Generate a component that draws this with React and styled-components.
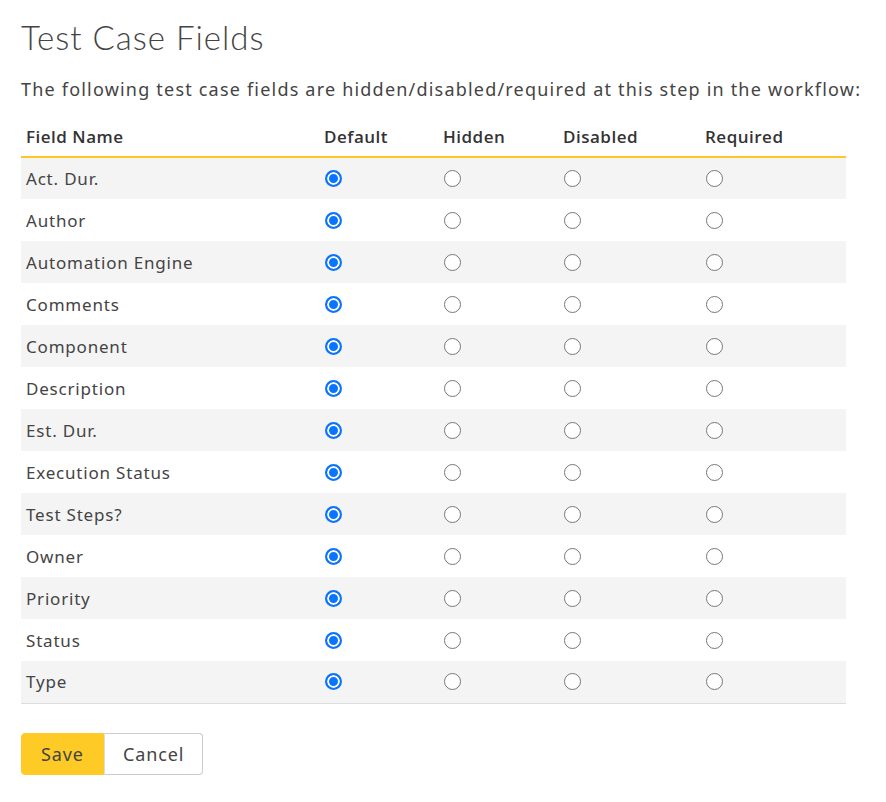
import React, { useState } from "react";
import styled, { createGlobalStyle } from "styled-components";

const FIELDS = [
  "Act. Dur.",
  "Author",
  "Automation Engine",
  "Comments",
  "Component",
  "Description",
  "Est. Dur.",
  "Execution Status",
  "Test Steps?",
  "Owner",
  "Priority",
  "Status",
  "Type",
];

const STATES = ["Default", "Hidden", "Disabled", "Required"];

export default function App() {
  const [values, setValues] = useState(
    Object.fromEntries(FIELDS.map((f) => [f, "Default"]))
  );

  return (
    <Page>
      <GlobalStyle />
      <Title>Test Case Fields</Title>
      <Intro>
        The following test case fields are hidden/disabled/required at this
        step in the workflow:
      </Intro>

      <Table>
        <colgroup>
          <col width={299} />
          <col width={119} />
          <col width={120} />
          <col width={142} />
          <col />
        </colgroup>
        <thead>
          <tr>
            <HeadCell first>Field Name</HeadCell>
            {STATES.map((state) => (
              <HeadCell key={state}>{state}</HeadCell>
            ))}
          </tr>
        </thead>
        <tbody>
          {FIELDS.map((field) => (
            <Row key={field}>
              <NameCell>{field}</NameCell>
              {STATES.map((state) => (
                <RadioCell key={state}>
                  <Radio
                    type="radio"
                    name={field}
                    checked={values[field] === state}
                    onChange={() => setValues({ ...values, [field]: state })}
                  />
                </RadioCell>
              ))}
            </Row>
          ))}
        </tbody>
      </Table>

      <ButtonGroup>
        <Button primary>Save</Button>
        <Button>Cancel</Button>
      </ButtonGroup>
    </Page>
  );
}

const GlobalStyle = createGlobalStyle`
  body {
    margin: 0;
    background: #fff;
    font-family: "Noto Sans", "Open Sans", sans-serif;
    color: #444;
  }
`;

const Page = styled.div`
  padding: 16px 0 20px 21px;
  width: 825px;
`;

const Title = styled.h1`
  margin: 0;
  font-family: Lato, "Open Sans", sans-serif;
  font-weight: 300;
  font-size: 33px;
  line-height: 42px;
  color: #444;
  letter-spacing: 1px;
`;

const Intro = styled.p`
  margin: 19px 0 23px;
  font-size: 18px;
  line-height: 24px;
  white-space: nowrap;
  letter-spacing: 1.2px;
  color: #444;
`;

const Table = styled.table`
  width: 825px;
  table-layout: fixed;
  border-collapse: collapse;
  font-size: 17px;
  letter-spacing: 0.8px;
  border-bottom: 1px solid #ddd;
`;

const HeadCell = styled.th`
  text-align: left;
  font-family: "Open Sans", "Noto Sans", sans-serif;
  font-weight: 600;
  letter-spacing: 0.5px;
  color: #333;
  padding: 0 4px 7px ${(p) => (p.first ? "5px" : "4px")};
  height: 25px;
  border-bottom: 2px solid #fdc826;
`;

const Row = styled.tr`
  height: 42px;
  &:nth-child(odd) {
    background: #f4f4f4;
  }
`;

const NameCell = styled.td`
  padding: 0 4px 0 5px;
  white-space: nowrap;
`;

const RadioCell = styled.td`
  padding: 0 4px 0 5px;
`;

const Radio = styled.input`
  appearance: none;
  display: block;
  margin: 0;
  width: 17px;
  height: 17px;
  border-radius: 50%;
  border: 1px solid #777;
  background: #fff;

  &:checked {
    border: 2px solid #0a74ff;
    box-shadow: inset 0 0 0 2px #fff;
    background: #0a74ff;
  }
`;

const ButtonGroup = styled.div`
  display: flex;
  margin-top: 29px;
`;

const Button = styled.button`
  height: 42px;
  padding: 0 ${(p) => (p.primary ? "19px" : "18px")};
  font-family: "Noto Sans", "Open Sans", sans-serif;
  font-size: 18px;
  letter-spacing: 0.9px;
  color: #444;
  background: ${(p) => (p.primary ? "#fdca26" : "#fff")};
  border: 1px solid ${(p) => (p.primary ? "#fdca26" : "#ccc")};
  border-radius: ${(p) => (p.primary ? "4px 0 0 4px" : "0 4px 4px 0")};
  ${(p) => !p.primary && "border-left-color: #ddd;"}
`;
